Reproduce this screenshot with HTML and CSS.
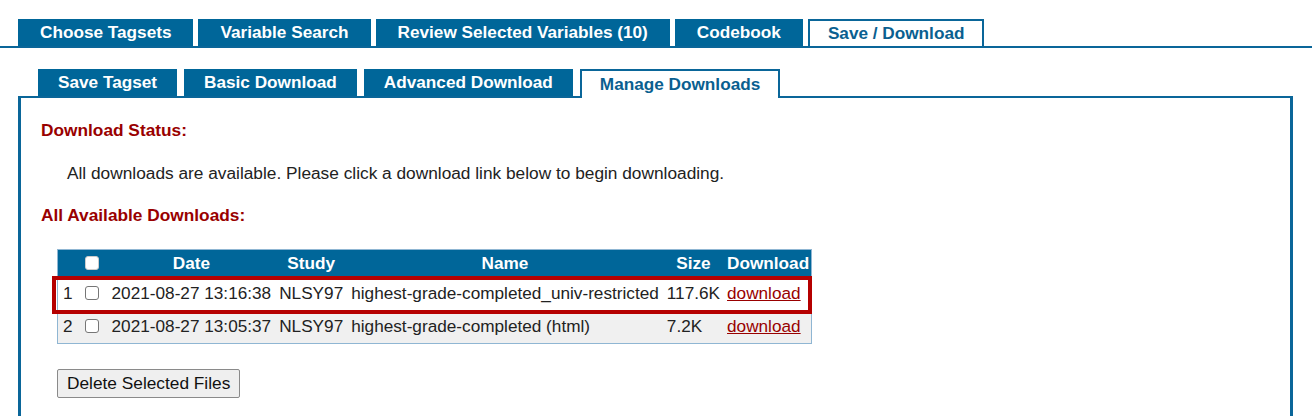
FILE: index.html
```html
<!DOCTYPE html>
<html>
<head>
<meta charset="utf-8">
<link rel="stylesheet" href="styles.css">
</head>
<body>
<div class="main-tabs">
  <div class="tab">Choose Tagsets</div>
  <div class="tab">Variable Search</div>
  <div class="tab">Review Selected Variables (10)</div>
  <div class="tab">Codebook</div>
  <div class="tab active">Save / Download</div>
</div>
<div class="sub-area">
  <div class="sub-tabs">
    <div class="tab sub">Save Tagset</div>
    <div class="tab sub">Basic Download</div>
    <div class="tab sub">Advanced Download</div>
    <div class="tab sub active">Manage Downloads</div>
  </div>
  <div class="panel">
    <h3 class="heading">Download Status:</h3>
    <p class="status">All downloads are available. Please click a download link below to begin downloading.</p>
    <h3 class="heading">All Available Downloads:</h3>
    <div class="table-wrap">
      <table class="dl-table">
        <thead>
          <tr>
            <th></th>
            <th><span class="cb head"></span></th>
            <th>Date</th>
            <th>Study</th>
            <th>Name</th>
            <th>Size</th>
            <th>Download</th>
          </tr>
        </thead>
        <tbody>
          <tr>
            <td class="num">1</td>
            <td><span class="cb"></span></td>
            <td>2021-08-27 13:16:38</td>
            <td>NLSY97</td>
            <td>highest-grade-completed_univ-restricted</td>
            <td>117.6K</td>
            <td><a href="#">download</a></td>
          </tr>
          <tr class="alt">
            <td class="num">2</td>
            <td><span class="cb"></span></td>
            <td>2021-08-27 13:05:37</td>
            <td>NLSY97</td>
            <td>highest-grade-completed (html)</td>
            <td>7.2K</td>
            <td><a href="#">download</a></td>
          </tr>
        </tbody>
      </table>
      <div class="highlight"></div>
    </div>
    <button class="btn">Delete Selected Files</button>
  </div>
</div>
</body>
</html>
```

FILE: styles.css
```css
html, body {
  margin: 0;
  padding: 0;
  background: #ffffff;
  font-family: "Liberation Sans", Arial, sans-serif;
  overflow: hidden;
}

.main-tabs {
  display: flex;
  gap: 5px;
  padding: 19px 0 0 18px;
  border-bottom: 2px solid #0a6699;
}

.tab {
  box-sizing: border-box;
  height: 27px;
  line-height: 27px;
  padding: 0 22px;
  background: #006699;
  color: #ffffff;
  font-size: 17.2px;
  font-weight: bold;
  white-space: nowrap;
}

.tab.active {
  background: #ffffff;
  color: #0a5f90;
  border: 2px solid #0a6699;
  border-bottom: none;
  line-height: 25px;
  padding: 0 18px;
}

.sub-area {
  margin: 21px 19px 0 18px;
}

.sub-tabs {
  display: flex;
  align-items: flex-end;
  gap: 6px;
  margin: 0 0 -2px 20px;
  position: relative;
  z-index: 1;
}

.tab.sub {
  padding: 0 20px;
  margin-bottom: 2px;
}

.tab.sub:nth-child(n+2) {
  margin-left: 1px;
}

.tab.sub.active {
  height: 29px;
  margin-bottom: 0;
  margin-left: 1px;
  padding: 0 18px;
  line-height: 27px;
}

.panel {
  border: 3px solid #0a6699;
  border-top-width: 2px;
  border-bottom: none;
  padding: 22px 0 0 20px;
  height: 296px;
}

.heading {
  margin: 0;
  font-size: 17.3px;
  line-height: 20px;
  font-weight: bold;
  color: #990000;
}

.status {
  margin: 23px 0 22px 26px;
  font-size: 17.3px;
  line-height: 20px;
  color: #222222;
}

.table-wrap {
  position: relative;
  display: inline-block;
  margin: 24px 0 0 16px;
}

.dl-table {
  border-collapse: collapse;
  border: 1px solid #8fb6d3;
  font-size: 17.2px;
  color: #222222;
}

.dl-table th {
  background: #006699;
  color: #ffffff;
  font-weight: bold;
  height: 27px;
  padding: 0 4px;
  text-align: center;
  white-space: nowrap;
}

.dl-table td {
  height: 33px;
  padding: 0 4px;
  white-space: nowrap;
}

.dl-table th:last-child,
.dl-table td:last-child {
  padding-right: 2px;
  padding-left: 3px;
}

.dl-table td.num {
  padding-left: 5px;
  padding-right: 2px;
}

.dl-table tr.alt td {
  background: #f0f0f0;
}

.dl-table a {
  color: #990000;
  text-decoration: underline;
}

.cb {
  display: inline-block;
  box-sizing: border-box;
  width: 14px;
  height: 14px;
  border: 1px solid #767676;
  border-radius: 3px;
  background: #ffffff;
  vertical-align: -1px;
  margin: 0 5px 0 6px;
}

.cb.head {
  border-color: #cccccc;
}

.highlight {
  position: absolute;
  left: -5px;
  right: 0;
  top: 27px;
  height: 38px;
  box-sizing: border-box;
  border: 4px solid #b50000;
  pointer-events: none;
}

.btn {
  display: block;
  margin: 21px 0 0 16px;
  height: 29px;
  padding: 0 9px;
  font-family: "Liberation Sans", Arial, sans-serif;
  font-size: 17.3px;
  color: #111111;
  background: #efefef;
  border: 1px solid #8a8a8a;
  border-radius: 2px;
}
```
